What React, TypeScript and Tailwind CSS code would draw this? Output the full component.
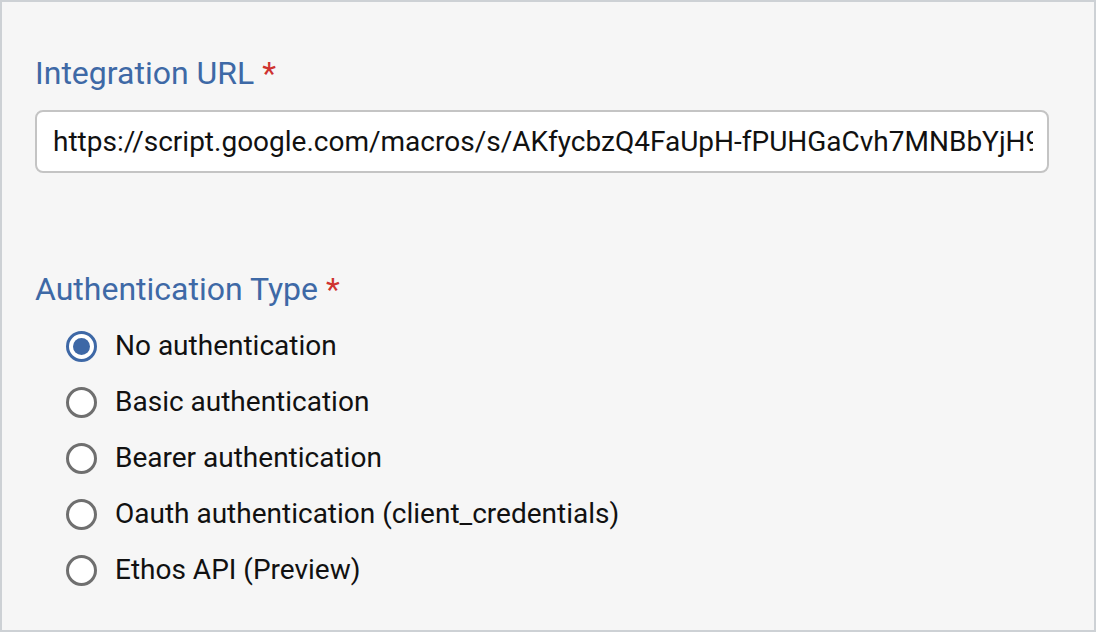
import React from "react";

const options = [
  "No authentication",
  "Basic authentication",
  "Bearer authentication",
  "Oauth authentication (client_credentials)",
  "Ethos API (Preview)",
];

function Radio({ checked }: { checked: boolean }) {
  return checked ? (
    <span className="flex h-[31px] w-[31px] shrink-0 items-center justify-center rounded-full border-[3px] border-[#3e68a6] bg-white">
      <span className="h-[17px] w-[17px] rounded-full bg-[#3e68a6]" />
    </span>
  ) : (
    <span className="h-[31px] w-[31px] shrink-0 rounded-full border-[3px] border-[#6f6f6f] bg-white" />
  );
}

export default function App() {
  return (
    <div
      className="h-[632px] w-[1096px] border-2 border-[#cdd1d5] bg-[#f6f6f6] pl-[33px] pr-[45px] pt-[52px]"
      style={{ fontFamily: "Roboto, 'Liberation Sans', sans-serif" }}
    >
      <div className="text-[32px] leading-[38px] text-[#3e69a6]">
        Integration URL <span className="text-[#cf3330]">*</span>
      </div>
      <input
        readOnly
        value="https://script.google.com/macros/s/AKfycbzQ4FaUpH-fPUHGaCvh7MNBbYjH9"
        className="mt-[18px] block h-[63px] w-full rounded-[8px] border-2 border-[#c4c4c4] bg-white pl-[16px] pr-[14px] text-[28px] text-[#111] outline-none"
      />
      <div className="mt-[97px] text-[32px] leading-[38px] text-[#3e69a6]">
        Authentication Type <span className="text-[#cf3330]">*</span>
      </div>
      <div className="mt-[10px] flex flex-col pl-[31px]">
        {options.map((o, i) => (
          <label key={o} className="flex h-[56px] items-center gap-[18px] text-[28px] text-[#111]">
            <Radio checked={i === 0} />
            <span>{o}</span>
          </label>
        ))}
      </div>
    </div>
  );
}
